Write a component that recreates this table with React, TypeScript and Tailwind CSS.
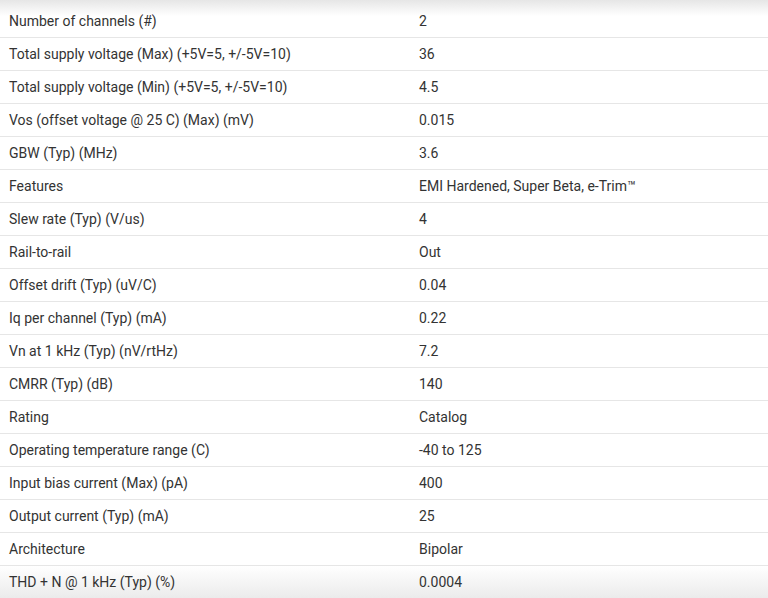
const specs: [string, string][] = [
  ["Number of channels (#)", "2"],
  ["Total supply voltage (Max) (+5V=5, +/-5V=10)", "36"],
  ["Total supply voltage (Min) (+5V=5, +/-5V=10)", "4.5"],
  ["Vos (offset voltage @ 25 C) (Max) (mV)", "0.015"],
  ["GBW (Typ) (MHz)", "3.6"],
  ["Features", "EMI Hardened, Super Beta, e-Trim™"],
  ["Slew rate (Typ) (V/us)", "4"],
  ["Rail-to-rail", "Out"],
  ["Offset drift (Typ) (uV/C)", "0.04"],
  ["Iq per channel (Typ) (mA)", "0.22"],
  ["Vn at 1 kHz (Typ) (nV/rtHz)", "7.2"],
  ["CMRR (Typ) (dB)", "140"],
  ["Rating", "Catalog"],
  ["Operating temperature range (C)", "-40 to 125"],
  ["Input bias current (Max) (pA)", "400"],
  ["Output current (Typ) (mA)", "25"],
  ["Architecture", "Bipolar"],
  ["THD + N @ 1 kHz (Typ) (%)", "0.0004"],
];

export default function App() {
  return (
    <div className="relative h-[598px] w-[768px] overflow-hidden bg-white font-['Roboto',sans-serif] text-[14px] text-[#333]">
      {/* shading at top and bottom, behind the rows */}
      <div className="absolute inset-x-0 top-0 h-[16px] bg-gradient-to-b from-[#e6e6e6] to-white" />
      <div className="absolute inset-x-0 bottom-0 h-[32px] bg-gradient-to-t from-[#ebebeb] to-white" />
      <div className="relative pt-[5px]">
        {specs.map(([label, value], i) => (
          <div
            key={i}
            className="flex h-[33px] items-center border-b border-[#e6e6e6]"
          >
            <div className="w-[410px] pl-[9px]">{label}</div>
            <div className="flex-1 pl-[9px]">{value}</div>
          </div>
        ))}
      </div>
    </div>
  );
}
